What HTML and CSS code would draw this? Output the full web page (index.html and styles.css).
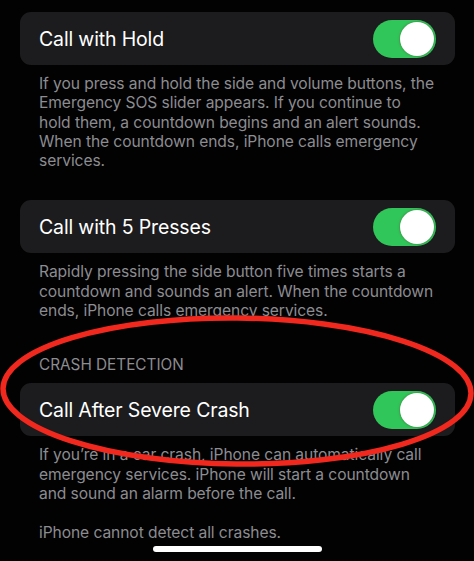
FILE: index.html
```html
<!DOCTYPE html>
<html>
<head>
<meta charset="utf-8">
<link rel="stylesheet" href="styles.css">
</head>
<body>
<main class="screen">
  <section class="group g1">
    <div class="card">
      <span class="label">Call with Hold</span>
      <span class="toggle"><span class="knob"></span></span>
    </div>
    <p class="desc">If you press and hold the side and volume buttons, the Emergency SOS slider appears. If you continue to hold them, a countdown begins and an alert sounds. When the countdown ends, iPhone calls emergency services.</p>
  </section>
  <section class="group g2">
    <div class="card">
      <span class="label">Call with 5 Presses</span>
      <span class="toggle"><span class="knob"></span></span>
    </div>
    <p class="desc">Rapidly pressing the side button five times starts a countdown and sounds an alert. When the countdown ends, iPhone calls emergency services.</p>
  </section>
  <section class="group g3">
    <h2 class="header">CRASH DETECTION</h2>
    <div class="card">
      <span class="label">Call After Severe Crash</span>
      <span class="toggle"><span class="knob"></span></span>
    </div>
    <p class="desc">If you’re in a car crash, iPhone can automatically call emergency services. iPhone will start a countdown and sound an alarm before the call.</p>
    <p class="desc note">iPhone cannot detect all crashes.</p>
  </section>
  <svg class="circle" width="474" height="561" viewBox="0 0 474 561">
    <ellipse cx="237" cy="391" rx="234" ry="73" fill="none" stroke="#f1281d" stroke-width="5.5" transform="rotate(0.6 237 391)"/>
  </svg>
  <div class="home"></div>
</main>
</body>
</html>
```
FILE: styles.css
```css
html, body {
  margin: 0;
  padding: 0;
  background: #000;
}
.screen {
  position: relative;
  width: 474px;
  height: 561px;
  overflow: hidden;
  background: #020202;
  font-family: Inter, "Liberation Sans", sans-serif;
  display: flex;
  flex-direction: column;
}
.group {
  display: flex;
  flex-direction: column;
  padding: 0 19px 0 20px;
}
.g1 { margin-top: 12px; }
.g2 { margin-top: 30px; }
.g3 { margin-top: 36px; }
.card {
  height: 53px;
  background: #1c1c1e;
  border-radius: 11px;
  display: flex;
  align-items: center;
  justify-content: space-between;
  padding: 0 19px 0 19px;
}
.label {
  color: #fff;
  font-size: 19.5px;
  letter-spacing: -0.15px;
}
.toggle {
  width: 63px;
  height: 38px;
  border-radius: 19px;
  background: #31c659;
  display: flex;
  align-items: center;
  justify-content: flex-end;
  padding: 0 2px;
  box-sizing: border-box;
}
.knob {
  width: 34px;
  height: 34px;
  border-radius: 50%;
  background: #fff;
  box-shadow: 0 0 1.5px 1px rgba(60, 140, 70, 0.6);
}
.desc {
  margin: 9px 0 0 0;
  padding: 0 20px 0 19px;
  color: #8c8c91;
  font-size: 15.6px;
  line-height: 19.3px;
  letter-spacing: -0.08px;
}
.note {
  margin-top: 20px;
}
.header {
  margin: 0 0 9px 0;
  padding: 0 19px;
  color: #8c8c91;
  font-weight: 400;
  font-size: 15.3px;
  line-height: 18px;
}
.circle {
  position: absolute;
  left: 0;
  top: 0;
  pointer-events: none;
}
.home {
  position: absolute;
  left: 153px;
  top: 546px;
  width: 169px;
  height: 6px;
  border-radius: 3px;
  background: #fff;
}
```
